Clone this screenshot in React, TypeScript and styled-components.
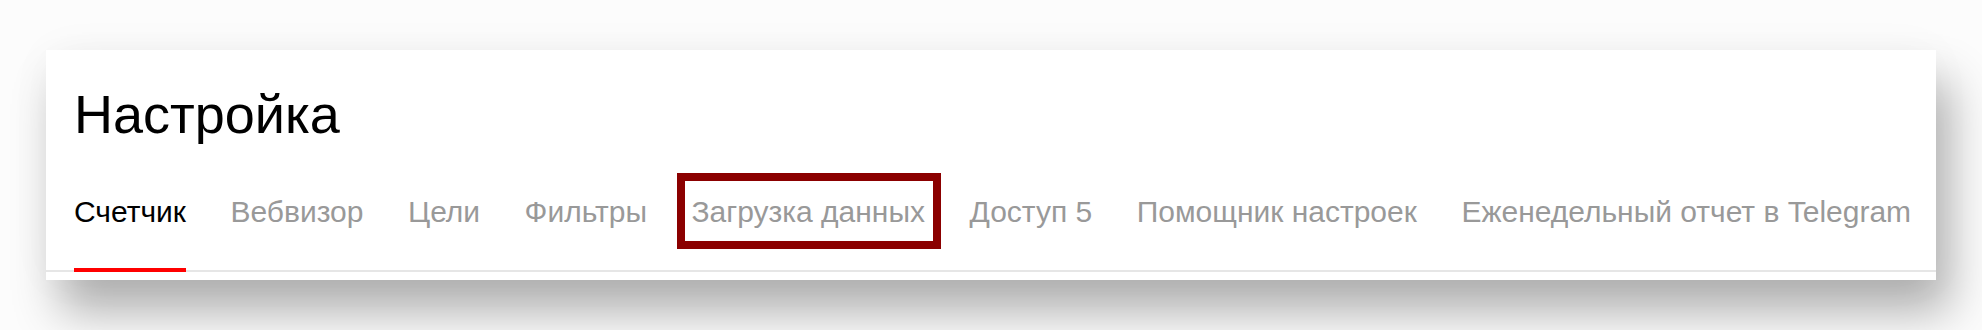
import styled, { createGlobalStyle } from 'styled-components';

const GlobalStyle = createGlobalStyle`
  html, body {
    margin: 0;
    padding: 0;
    background: #ffffff;
  }

  body {
    font-family: "Liberation Sans", Arial, sans-serif;
  }
`;

const Page = styled.div`
  width: 1982px;
  height: 330px;
  box-sizing: border-box;
  padding: 50px 46px;
  background: #fcfcfc;
`;

const Card = styled.section`
  background: #ffffff;
  height: 230px;
  box-sizing: border-box;
  padding: 33px 0 8px 0;
  display: flex;
  flex-direction: column;
  box-shadow: 14px 32px 44px rgba(0, 0, 0, 0.3), 0 0 44px rgba(0, 0, 0, 0.03);
`;

const Title = styled.h1`
  margin: 0 0 0 28px;
  font-size: 54px;
  line-height: 62px;
  font-weight: 400;
  color: #000;
`;

const TabBar = styled.nav`
  margin-top: 50px;
  padding-left: 28px;
  display: flex;
  gap: 44.5px;
  border-bottom: 2px solid #e6e6e6;
`;

interface TabProps {
  $active?: boolean;
  $marked?: boolean;
}

const Tab = styled.a<TabProps>`
  position: relative;
  font-size: 30px;
  line-height: 34px;
  padding-bottom: 39px;
  margin-bottom: -2px;
  white-space: nowrap;
  color: ${p => (p.$active ? '#000' : '#999')};
  border-bottom: 4px solid ${p => (p.$active ? '#ff0000' : 'transparent')};
  cursor: pointer;

  ${p =>
    p.$marked &&
    `
    &::before {
      content: '';
      position: absolute;
      top: -22px;
      left: -14px;
      right: -16px;
      height: 76px;
      box-sizing: border-box;
      border: 8px solid #8b0000;
    }
  `}
`;

const tabs = [
  { label: 'Счетчик', active: true },
  { label: 'Вебвизор' },
  { label: 'Цели' },
  { label: 'Фильтры' },
  { label: 'Загрузка данных', marked: true },
  { label: 'Доступ 5' },
  { label: 'Помощник настроек' },
  { label: 'Еженедельный отчет в Telegram' },
];

export default function App() {
  return (
    <>
      <GlobalStyle />
      <Page>
        <Card>
          <Title>Настройка</Title>
          <TabBar>
            {tabs.map(t => (
              <Tab key={t.label} $active={t.active} $marked={t.marked}>
                {t.label}
              </Tab>
            ))}
          </TabBar>
        </Card>
      </Page>
    </>
  );
}
